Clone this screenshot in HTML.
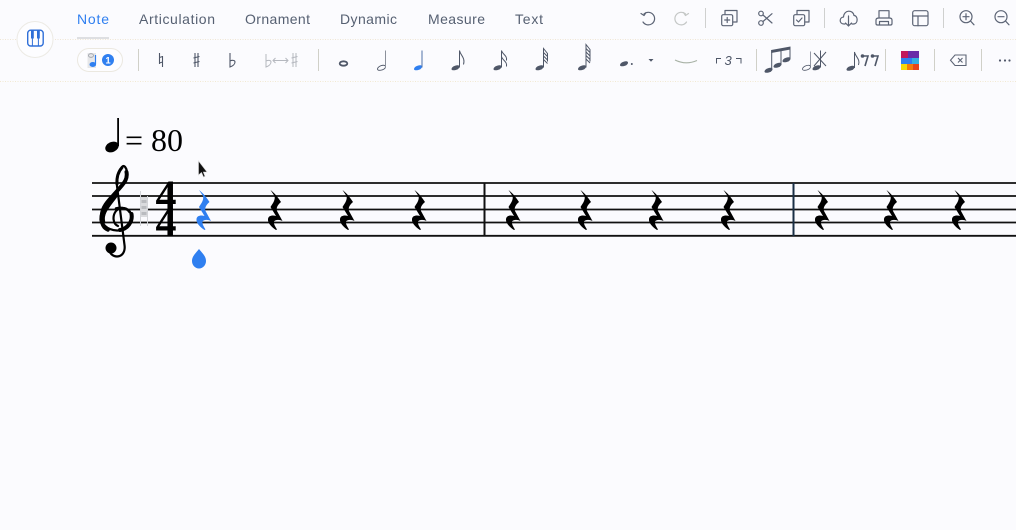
<!DOCTYPE html>
<html><head><meta charset="utf-8"><style>
html,body{margin:0;padding:0;width:1016px;height:530px;overflow:hidden;background:#fbfbfe}
svg{position:absolute;left:0;top:0}
text{font-family:"Liberation Sans",sans-serif}
</style></head><body>
<svg width="1016" height="530" viewBox="0 0 1016 530" xmlns="http://www.w3.org/2000/svg">
<defs>
<path id="r" d="M1,0 C5,3 9,8 11.5,12 C8,15 6.500,18 7.500,21 L13,31 C10,29.500 6,29.500 4.500,31.500 C4,34 6,37 7.500,39.500 L6.500,40 C2,37 -2,33 -1.500,29 C-1,25.500 3,25 6.500,26 L1,17 C3.500,13 6,10 5,6 Z"/>
<path id="nh" d="M-4,1.6 C-4,-0.6 0,-2.6 2.6,-2.2 C4.6,-1.8 4.4,0.4 2.4,1.6 C0,3 -4,3.4 -4,1.6 Z"/>
</defs>
<rect width="1016" height="530" fill="#fbfbfe"/>
<!-- dotted separators -->
<line x1="0" y1="39.5" x2="1016" y2="39.5" stroke="#efe6d4" stroke-dasharray="1 1.5"/>
<line x1="0" y1="81.5" x2="1016" y2="81.5" stroke="#f2e8d2" stroke-dasharray="1 1.5"/>
<!-- piano button -->
<circle cx="35" cy="39.500" r="18" fill="#fdfdff" stroke="#eceae4"/>
<rect x="27.700" y="30.200" width="15.500" height="15.800" rx="3" fill="none" stroke="#2f6fd8" stroke-width="1.400"/>
<path d="M31,30.500 h2.800 v8 h-2.800z M37,30.500 h2.800 v8 h-2.800z" fill="#2f6fd8"/>
<path d="M32.400,38 v8 M38.400,38 v8" stroke="#2f6fd8" stroke-width="1"/>
<!-- tabs -->
<g font-size="14" fill="#566072">
<text x="77" y="24" fill="#2f7ff0" textLength="32">Note</text>
<text x="139" y="24" textLength="76">Articulation</text>
<text x="245" y="24" textLength="65">Ornament</text>
<text x="340" y="24" textLength="57">Dynamic</text>
<text x="428" y="24" textLength="57">Measure</text>
<text x="515" y="24" textLength="28">Text</text>
</g>
<rect x="77" y="37" width="32" height="2" fill="#dedfe2"/>
<!-- note pill -->
<rect x="77.500" y="48.500" width="45" height="23" rx="11.500" fill="#fdfdff" stroke="#ebe8e0"/>
<rect x="87.500" y="53" width="8.500" height="15" fill="#e6e7e9"/>
<ellipse cx="91" cy="55.500" rx="2.500" ry="1.800" fill="none" stroke="#9a9ea6" stroke-width=".8"/>
<path d="M95.500,55 v9" stroke="#2f7ff0" stroke-width="1.200"/>
<ellipse cx="92.800" cy="64.500" rx="3.300" ry="2.500" fill="#2f7ff0"/>
<circle cx="108" cy="60" r="6" fill="#2f7ff0"/>
<text x="108" y="63.500" font-size="9.500" font-weight="bold" fill="#fff" text-anchor="middle">1</text>
<!-- vertical separators row 2 -->
<g stroke="#d0d0c8" stroke-width="1">
<line x1="138.500" y1="49" x2="138.500" y2="71"/>
<line x1="318.500" y1="49" x2="318.500" y2="71"/>
<line x1="756.500" y1="49" x2="756.500" y2="71"/>
<line x1="885.500" y1="49" x2="885.500" y2="71"/>
<line x1="934.500" y1="49" x2="934.500" y2="71"/>
<line x1="981.500" y1="49" x2="981.500" y2="71"/>
</g>
<!-- accidentals -->
<g stroke="#4f5768" fill="none" stroke-width="1.100">
<path d="M159.500,53 v11 M162.500,56 v11 M159.500,57.500 l3,-1 M159.500,63 l3,-1"/>
<path d="M195,53 v14 M198,53 v14 M193.500,58 l6,-1.500 M193.500,63 l6,-1.500"/>
<path d="M230,53 v14 c3,-1 5,-3 5,-5 c0,-2 -3,-2 -5,-1"/>
</g>
<g stroke="#b5b8bf" fill="none" stroke-width="1">
<path d="M266,54 v13 c3,-1 5,-3 5,-5 c0,-2 -3,-2 -5,-1"/>
<path d="M273,60.500 h15 M275.500,58 l-2.500,2.500 l2.500,2.500 M285.500,58 l2.500,2.500 l-2.500,2.500"/>
<path d="M293,53 v14 M296,53 v14 M291.500,58 l6,-1.500 M291.500,63 l6,-1.500"/>
</g>
<!-- notes -->
<g fill="#4f5768" stroke="#4f5768">
<ellipse cx="343.500" cy="63.500" rx="3.800" ry="2.200" fill="none" stroke-width="1.800"/>
<g transform="translate(381.500,67.500)"><use href="#nh" fill="none" stroke-width=".9"/><path d="M4,0 V-17" fill="none" stroke="#8b909b"/></g>
<g transform="translate(418,67.500)"><use href="#nh" fill="#2f7ff0" stroke="none"/><path d="M4,0 V-17" fill="none" stroke="#4f70a8"/></g>
<g transform="translate(455.500,67.500)" stroke-width="1"><use href="#nh" stroke="none"/><path d="M4,0 V-17 c1,5 6,7 4,14" fill="none"/></g>
<g transform="translate(497.500,67.500)" stroke-width="1"><use href="#nh" stroke="none"/><path d="M4,0 V-17 c1,4 6,5 5,10 M4,-11 c1,4 6,5 5,10" fill="none"/></g>
<g transform="translate(539.500,67.500)" stroke-width="1"><use href="#nh" stroke="none"/><path d="M4,0 V-19 l4,5 v8 M4,-15 l4,4 M4,-11.500 l4,4 M4,-8 l4,4" fill="none"/></g>
<g transform="translate(582,67.500)" stroke-width="1"><use href="#nh" stroke="none"/><path d="M4,0 V-23 l4,5 v12 M4,-19 l4,4 M4,-15.500 l4,4 M4,-12 l4,4 M4,-8.500 l4,4" fill="none"/></g>
<g transform="translate(624,63.500)"><use href="#nh" stroke="none"/></g>
<circle cx="631.800" cy="64" r="1" stroke="none"/>
<path d="M648.500,59 h5 l-2.500,2.800z" stroke="none"/>
</g>
<!-- tie -->
<path d="M675,60 C682,63.500 690,63.500 697,60.500" fill="none" stroke="#a8b2a6" stroke-width="1.200"/>
<!-- triplet -->
<path d="M716.500,63.500 V58.500 H721 M736,58.500 H741 V63.500" fill="none" stroke="#4f5768" stroke-width="1"/>
<text x="724.500" y="65" font-size="13" font-style="italic" fill="#4f5768">3</text>
<!-- beamed -->
<g fill="#4f5768" stroke="#4f5768">
<path d="M771.700,70 L771.700,50 M781,65 L781,49 M790,59 L790,47" fill="none" stroke-width="1"/>
<path d="M771.200,50 L790.500,46.500 V49.500 L771.200,53Z" stroke="none"/>
<g stroke="none"><use href="#nh" transform="translate(768.500,70)"/><use href="#nh" transform="translate(777.500,65)"/><use href="#nh" transform="translate(786.500,59.500)"/></g>
<g transform="translate(806.500,67.500)"><use href="#nh" fill="none" stroke-width=".8"/><path d="M4,0 V-16" fill="none" stroke-width=".8" stroke="#7b8190"/></g>
<g transform="translate(816.500,67.500)"><use href="#nh" stroke="none"/><path d="M4,0 V-17" fill="none" stroke-width="1"/></g>
<path d="M814,53 L826,66 M826,52 L814,66" fill="none" stroke-width="1"/>
<g transform="translate(850.500,68)"><use href="#nh" stroke="none"/><path d="M4,0 V-16 c1,5 6,7 4,13" fill="none" stroke-width="1"/></g>
<path d="M861.500,56 h6.500 l-3,10 M871.500,56 h6.500 l-3,10" fill="none" stroke-width="1.600"/>
<circle cx="862.500" cy="56" r="1.800" stroke="none"/><circle cx="872.500" cy="56" r="1.800" stroke="none"/>
</g>
<!-- colour block -->
<g>
<rect x="901" y="51" width="9" height="7" fill="#c2185b"/>
<rect x="908" y="51" width="11" height="7" fill="#6a2ca8"/>
<rect x="901" y="58" width="11" height="6" fill="#2f7ff0"/>
<rect x="912" y="58" width="7" height="6" fill="#35b0e0"/>
<rect x="901" y="64" width="6" height="6" fill="#f5d90a"/>
<rect x="907" y="64" width="6" height="6" fill="#f47c0a"/>
<rect x="913" y="64" width="6" height="6" fill="#e8451a"/>
</g>
<!-- erase -->
<path d="M955,55 H966 V65.500 H955 L950.500,60.200Z" fill="none" stroke="#5c6475" stroke-width="1.100"/>
<path d="M958,58 l4.500,4.500 M962.500,58 l-4.500,4.500" stroke="#5c6475" stroke-width="1.100"/>
<g fill="#4f5768"><circle cx="1000" cy="60.500" r="1.100"/><circle cx="1005" cy="60.500" r="1.100"/><circle cx="1009.500" cy="60.500" r="1.100"/></g>
<!-- top-right tool icons -->
<g fill="none" stroke="#5c6475" stroke-width="1.200" stroke-linecap="round" stroke-linejoin="round">
<path d="M644,14 A6.300,6.300 0 1 1 643,22 M641,13.500 L644,15.500 L646,12.500"/>
<g stroke="#c4c7c6"><path d="M685.500,14 A6.300,6.300 0 1 0 686.500,22 M688.500,13.500 L685.500,15.500 L683.500,12.500"/></g>
<rect x="721.700" y="14.700" width="11" height="11" rx="1.500"/>
<path d="M725,14 V10.500 H737 V22 H733.500 M727.200,17.500 v5 M724.700,20 h5"/>
<circle cx="761" cy="13.500" r="2.300"/><circle cx="761" cy="23" r="2.300"/>
<path d="M763,15 L772,23 M763,21.500 L772,13.700"/>
<rect x="793.700" y="14.700" width="11" height="11" rx="1.500"/>
<path d="M797,14 V10.500 H809 V22 H805.500 M796.500,20 l2,2 l3.500,-4"/>
<path d="M845,24 H844 C839,24 839,17.500 843.500,17 C844,9.500 853,9.500 854,15.500 C858,15.500 858.500,24 853.500,24 H852 M848.500,16 V26 M845.500,23 L848.500,26 L851.500,23"/>
<path d="M879,18 V10.700 H889 V18 M877.500,25 C876,25 876,24 876,23.500 V20 C876,18.500 877.500,18 879,18 H889 C890.500,18 892,18.500 892,20 V23.500 C892,24 892,25 890.500,25 Z M879.500,21.500 H888.500 V25 H879.500Z"/>
<rect x="912.700" y="10.700" width="15.300" height="15" rx="2"/>
<path d="M912.700,16 H928 M918,16 V25.700"/>
<circle cx="966" cy="16.700" r="6"/><path d="M970.500,21 L974,24.800 M963,16.700 h6 M966,13.700 v6"/>
<circle cx="1001" cy="16.700" r="6"/><path d="M1005.500,21 L1009,24.800 M998,16.700 h6"/>
</g>
<g stroke="#cfd0cf">
<line x1="705.500" y1="8" x2="705.500" y2="28"/>
<line x1="824.500" y1="8" x2="824.500" y2="28"/>
<line x1="943.500" y1="8" x2="943.500" y2="28"/>
</g>
<!-- tempo -->
<g fill="#000">
<ellipse cx="112" cy="147" rx="7" ry="5" transform="rotate(-24 112 147)"/>
<rect x="117.200" y="118" width="1.800" height="28"/>
</g>
<text x="125" y="151" font-size="32" style="font-family:'Liberation Serif',serif" fill="#000">= 80</text>
<!-- staff -->
<g stroke="#111" stroke-width="1.800">
<line x1="92" y1="183" x2="1016" y2="183"/>
<line x1="92" y1="196" x2="1016" y2="196"/>
<line x1="92" y1="209.500" x2="1016" y2="209.500"/>
<line x1="92" y1="222.500" x2="1016" y2="222.500"/>
<line x1="92" y1="235.800" x2="1016" y2="235.800"/>
</g>
<line x1="484.500" y1="183" x2="484.500" y2="236" stroke="#111" stroke-width="2"/>
<line x1="793.500" y1="183" x2="793.500" y2="236" stroke="#1a2f45" stroke-width="2"/>
<!-- clef -->
<g fill="none" stroke="#000" stroke-linecap="round">
<path d="M118,226 C113,224 112,216 116,211 C120,206 130,207 131.500,216 C132.500,225 125,231 117,230.500 C107,230 100.500,224 101,215 C101.500,205 110,198 116,191 C122,184 128,180 127,172 C126.500,168 124,164 122,167 C118,172 116,178 117,186 L124.500,245 C125.500,252 122,256.500 117,256.500 C113.500,256.500 110,254 109,250" stroke-width="2.200"/>
<path d="M102.500,222 C100,212 109,204 116,194" stroke-width="5.500"/>
<path d="M108,230 C103,228 101.500,224 101.500,218" stroke-width="3.500"/>
<path d="M131.500,214 C133,222 127,229 120,230" stroke-width="4"/>
<path d="M116,208.500 C121,207 127,208 129.500,212" stroke-width="2.500"/>
<path d="M118,190 C123,184 128,180 126.500,172" stroke-width="4"/>
<path d="M117,184 C116.500,177 118,172 122,167.500" stroke-width="3"/>
</g>
<circle cx="111" cy="248" r="5.500" fill="#000"/>
<!-- ghost natural -->
<rect x="140" y="197" width="8" height="20" fill="#dadbde"/>
<path d="M140.500,191 V226 M147.500,196 V226" stroke="#d2d4d8" stroke-width="1"/>
<path d="M141.500,200 h5 v3 h-5z M141.500,206 h5 v3 h-5z M141.500,212 h5 v3 h-5z" fill="#b9bbbf"/>
<!-- time signature -->
<g font-size="42" font-weight="bold" fill="#000" text-anchor="middle">
<text x="166" y="209.500" style="font-family:'Liberation Serif',serif">4</text>
<text x="166" y="236" style="font-family:'Liberation Serif',serif">4</text>
</g>
<!-- rests -->
<use href="#r" x="198" y="190" fill="#2f7ff0"/>
<g fill="#000">
<use href="#r" x="269.500" y="190"/><use href="#r" x="341.500" y="190"/><use href="#r" x="413.500" y="190"/>
<use href="#r" x="507.500" y="190"/><use href="#r" x="579.500" y="190"/><use href="#r" x="650.500" y="190"/><use href="#r" x="722.500" y="190"/>
<use href="#r" x="816.500" y="190"/><use href="#r" x="885.500" y="190"/><use href="#r" x="953.500" y="190"/>
</g>
<!-- drop -->
<path d="M199,249 C202,253 206,256 206,261 C206,265 203,268.500 199,268.500 C195,268.500 192,265 192,261 C192,256 196,253 199,249 Z" fill="#2f7ff0"/>
<!-- cursor -->
<path d="M198.500,161 V175 L201.500,172.500 L203.500,177 L205,176.300 L203.300,172 H207 Z" fill="#111" stroke="#d5d5d5" stroke-width=".6"/>
</svg>
</body></html>
